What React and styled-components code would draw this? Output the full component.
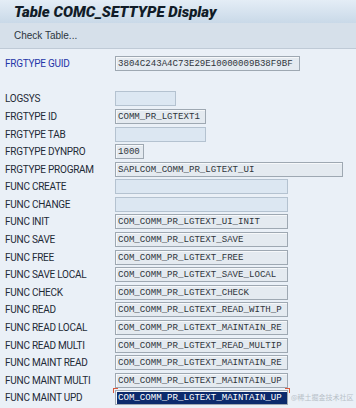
import styled, { createGlobalStyle } from 'styled-components';

const GlobalStyle = createGlobalStyle`
  html, body {
    margin: 0;
    padding: 0;
    background: #eaf0f7;
  }
  body {
    width: 356px;
    height: 408px;
    overflow: hidden;
    font-family: Tahoma, "DejaVu Sans", "Liberation Sans", sans-serif;
  }
`;

const Screen = styled.div`
  width: 356px;
  height: 408px;
  display: flex;
  flex-direction: column;
  background: #eaf0f7;
`;

const TitleBar = styled.div`
  height: 24px;
  display: flex;
  align-items: center;
  padding-left: 14px;
  background: linear-gradient(#e4edf6, #c9d9e8);
  font-family: Roboto, "Liberation Sans", Arial, sans-serif;
  font-size: 15px;
  font-weight: 900;
  font-style: italic;
  color: #111c28;
`;

const Toolbar = styled.div`
  height: 26px;
  display: flex;
  align-items: center;
  padding-left: 14px;
  background: #d6e0ea;
  border-bottom: 1px solid #bfcad6;
  font-family: "Liberation Sans", Arial, sans-serif;
  font-size: 10px;
  color: #2c3640;
`;

const Form = styled.div`
  display: grid;
  grid-template-columns: 110px 1fr;
  grid-auto-rows: 17.6px;
  padding: 7px 0 0 5px;
`;

const Label = styled.div`
  display: flex;
  align-items: center;
  height: 15px;
  font-family: Roboto, "Liberation Sans", Arial, sans-serif;
  font-size: 10px;
  letter-spacing: -0.25px;
  color: ${(p) => (p.$key ? '#2536a8' : '#1e2a36')};
  white-space: nowrap;
`;

const FieldCell = styled.div`
  display: flex;
  align-items: flex-start;
  gap: 3px;
`;

const Field = styled.div`
  position: relative;
  box-sizing: border-box;
  width: ${(p) => p.$w}px;
  height: 15px;
  padding: 0 2px;
  display: flex;
  align-items: center;
  overflow: hidden;
  white-space: nowrap;
  border: 1px solid ${(p) => (p.$empty ? '#b4c2d0' : '#9ea8b2')};
  background: ${(p) =>
    p.$selected ? '#0c2a6c' : p.$empty ? '#dce7f2' : '#e4eaf0'};
  color: ${(p) => (p.$selected ? '#ffffff' : '#30363c')};
  font-family: "Liberation Mono", "Courier New", monospace;
  font-size: 9.1px;
  box-shadow: ${(p) => (p.$empty ? 'none' : 'inset 1px 1px 0 #f6f8fa')};

  ${(p) =>
    p.$selected &&
    `
    overflow: visible;
    &::before, &::after {
      content: '';
      position: absolute;
      top: -3px;
      width: 4px;
      height: 4px;
      border-top: 1px solid #d9583a;
    }
    &::before {
      left: -3px;
      border-left: 1px solid #d9583a;
    }
    &::after {
      right: -3px;
      border-right: 1px solid #d9583a;
    }
  `}
`;

const Clip = styled.span`
  overflow: hidden;
  display: block;
  width: 100%;
`;

const Watermark = styled.span`
  font-family: "Noto Sans CJK SC", sans-serif;
  font-size: 7px;
  color: #b8c0c8;
  line-height: 15px;
  white-space: nowrap;
`;

const rows = [
  { label: 'FRGTYPE GUID', value: '3804C243A4C73E29E10000009B38F9BF', w: 185, key: true },
  null,
  { label: 'LOGSYS', value: '', w: 61 },
  { label: 'FRGTYPE ID', value: 'COMM_PR_LGTEXT1', w: 91 },
  { label: 'FRGTYPE TAB', value: '', w: 91 },
  { label: 'FRGTYPE DYNPRO', value: '1000', w: 29 },
  { label: 'FRGTYPE PROGRAM', value: 'SAPLCOM_COMM_PR_LGTEXT_UI', w: 228 },
  { label: 'FUNC CREATE', value: '', w: 173 },
  { label: 'FUNC CHANGE', value: '', w: 173 },
  { label: 'FUNC INIT', value: 'COM_COMM_PR_LGTEXT_UI_INIT', w: 173 },
  { label: 'FUNC SAVE', value: 'COM_COMM_PR_LGTEXT_SAVE', w: 173 },
  { label: 'FUNC FREE', value: 'COM_COMM_PR_LGTEXT_FREE', w: 173 },
  { label: 'FUNC SAVE LOCAL', value: 'COM_COMM_PR_LGTEXT_SAVE_LOCAL', w: 173 },
  { label: 'FUNC CHECK', value: 'COM_COMM_PR_LGTEXT_CHECK', w: 173 },
  { label: 'FUNC READ', value: 'COM_COMM_PR_LGTEXT_READ_WITH_P', w: 173 },
  { label: 'FUNC READ LOCAL', value: 'COM_COMM_PR_LGTEXT_MAINTAIN_RE', w: 173 },
  { label: 'FUNC READ MULTI', value: 'COM_COMM_PR_LGTEXT_READ_MULTIP', w: 173 },
  { label: 'FUNC MAINT READ', value: 'COM_COMM_PR_LGTEXT_MAINTAIN_RE', w: 173 },
  { label: 'FUNC MAINT MULTI', value: 'COM_COMM_PR_LGTEXT_MAINTAIN_UP', w: 173 },
  { label: 'FUNC MAINT UPD', value: 'COM_COMM_PR_LGTEXT_MAINTAIN_UP', w: 173, selected: true },
];

export default function App() {
  return (
    <Screen>
      <GlobalStyle />
      <TitleBar>Table COMC_SETTYPE Display</TitleBar>
      <Toolbar>Check Table...</Toolbar>
      <Form>
        {rows.map((row, i) =>
          row ? (
            [
              <Label key={`l${i}`} $key={row.key}>
                {row.label}
              </Label>,
              <FieldCell key={`f${i}`}>
                <Field $w={row.w} $empty={!row.value} $selected={row.selected}>
                  <Clip>{row.value}</Clip>
                </Field>
                {row.selected && <Watermark>@稀土掘金技术社区</Watermark>}
              </FieldCell>,
            ]
          ) : (
            [<div key={`l${i}`} />, <div key={`f${i}`} />]
          )
        )}
      </Form>
    </Screen>
  );
}
